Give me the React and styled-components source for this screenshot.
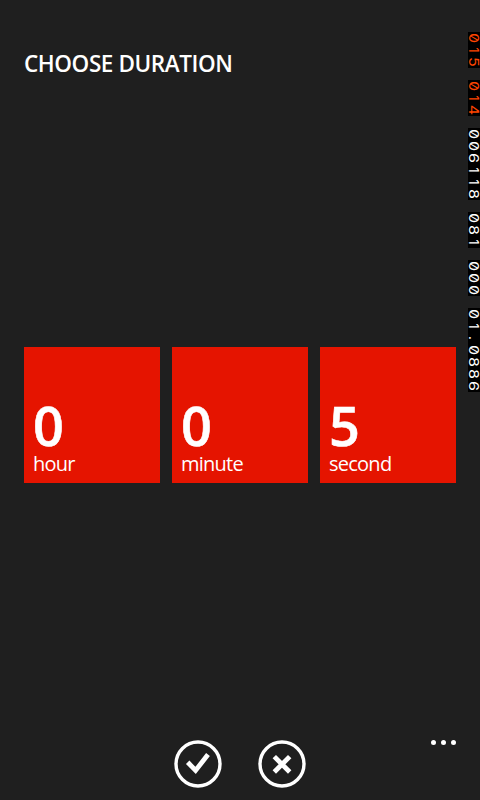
import React from "react";
import styled, { createGlobalStyle } from "styled-components";

const GlobalStyle = createGlobalStyle`
  * { box-sizing: border-box; }
  body { margin: 0; background: #1f1f1f; }
`;

const Screen = styled.main`
  position: relative;
  display: flex;
  flex-direction: column;
  width: 480px;
  height: 800px;
  overflow: hidden;
  background: #1f1f1f;
  color: #fff;
  font-family: "Open Sans", "Noto Sans", sans-serif;
`;

const Title = styled.h1`
  margin: 0;
  padding: 48px 24px 0;
  height: 347px;
  font-size: 22.5px;
  line-height: 32px;
  font-weight: 600;
  letter-spacing: -0.42px;
  white-space: nowrap;
`;

const Tiles = styled.section`
  display: grid;
  grid-template-columns: repeat(3, 136px);
  gap: 12px;
  padding: 0 24px;
`;

const Tile = styled.button`
  display: flex;
  flex-direction: column;
  justify-content: flex-end;
  height: 136px;
  padding: 0 9px 7px;
  border: 0;
  background: #e51400;
  color: #fff;
  font-family: inherit;
  text-align: left;
`;

const Value = styled.span`
  font-size: 54px;
  line-height: 54px;
  font-weight: 600;
  -webkit-text-stroke: 0.6px #fff;
`;

const Label = styled.span`
  font-size: 20px;
  line-height: 24px;
  letter-spacing: -0.75px;
`;

const AppBar = styled.footer`
  position: relative;
  display: flex;
  justify-content: center;
  gap: 36px;
  height: 72px;
  margin-top: auto;
  padding-top: 12px;
`;

const IconButton = styled.button`
  width: 48px;
  height: 48px;
  padding: 0;
  border: 0;
  background: none;
  svg { display: block; }
`;

const More = styled.div`
  position: absolute;
  top: 12px;
  right: 24px;
  display: flex;
  gap: 5px;
`;

const Dot = styled.i`
  width: 5px;
  height: 5px;
  border-radius: 50%;
  background: #fff;
`;

const Counters = styled.aside`
  position: absolute;
  top: 32px;
  right: 0;
  display: flex;
  flex-direction: column;
  gap: 12px;
  width: 12px;
`;

const Counter = styled.div`
  background: #000;
  color: ${(p) => (p.$alert ? "#ff4500" : "#fff")};
`;

const Digit = styled.span`
  display: flex;
  align-items: center;
  justify-content: center;
  width: 12px;
  height: 12px;
  font: 400 13.5px/12px Inter, sans-serif;
  font-feature-settings: "zero";
  transform: translateX(-0.5px) rotate(90deg) scaleX(${(p) => p.$stretch});
`;

const counters = [
  { text: "015", alert: true },
  { text: "014", alert: true },
  { text: "006118" },
  { text: "081" },
  { text: "000" },
  { text: "01.0886" },
];

const units = [
  { value: 0, label: "hour" },
  { value: 0, label: "minute" },
  { value: 5, label: "second" },
];

export default function App() {
  return (
    <Screen>
      <GlobalStyle />
      <Title>CHOOSE DURATION</Title>
      <Tiles>
        {units.map((u) => (
          <Tile key={u.label}>
            <Value>{u.value}</Value>
            <Label>{u.label}</Label>
          </Tile>
        ))}
      </Tiles>
      <AppBar>
        <IconButton aria-label="done">
          <svg width="48" height="48" fill="none" stroke="#fff">
            <circle cx="24" cy="24" r="22" strokeWidth="3.4" />
            <path d="M13.7 22.3L21.6 30.4L34 14.6" strokeWidth="4.8" />
          </svg>
        </IconButton>
        <IconButton aria-label="cancel">
          <svg width="48" height="48" fill="none" stroke="#fff">
            <circle cx="24" cy="24" r="22" strokeWidth="3.4" />
            <path d="M16.3 16.6L31.7 32M31.7 16.6L16.3 32" strokeWidth="4.8" />
          </svg>
        </IconButton>
        <More>
          <Dot />
          <Dot />
          <Dot />
        </More>
      </AppBar>
      <Counters>
        {counters.map((c) => (
          <Counter key={c.text} $alert={c.alert}>
            {[...c.text].map((ch, i) => (
              <Digit key={i} $stretch={ch === "1" || ch === "." ? 1 : 1.2}>
                {ch}
              </Digit>
            ))}
          </Counter>
        ))}
      </Counters>
    </Screen>
  );
}
